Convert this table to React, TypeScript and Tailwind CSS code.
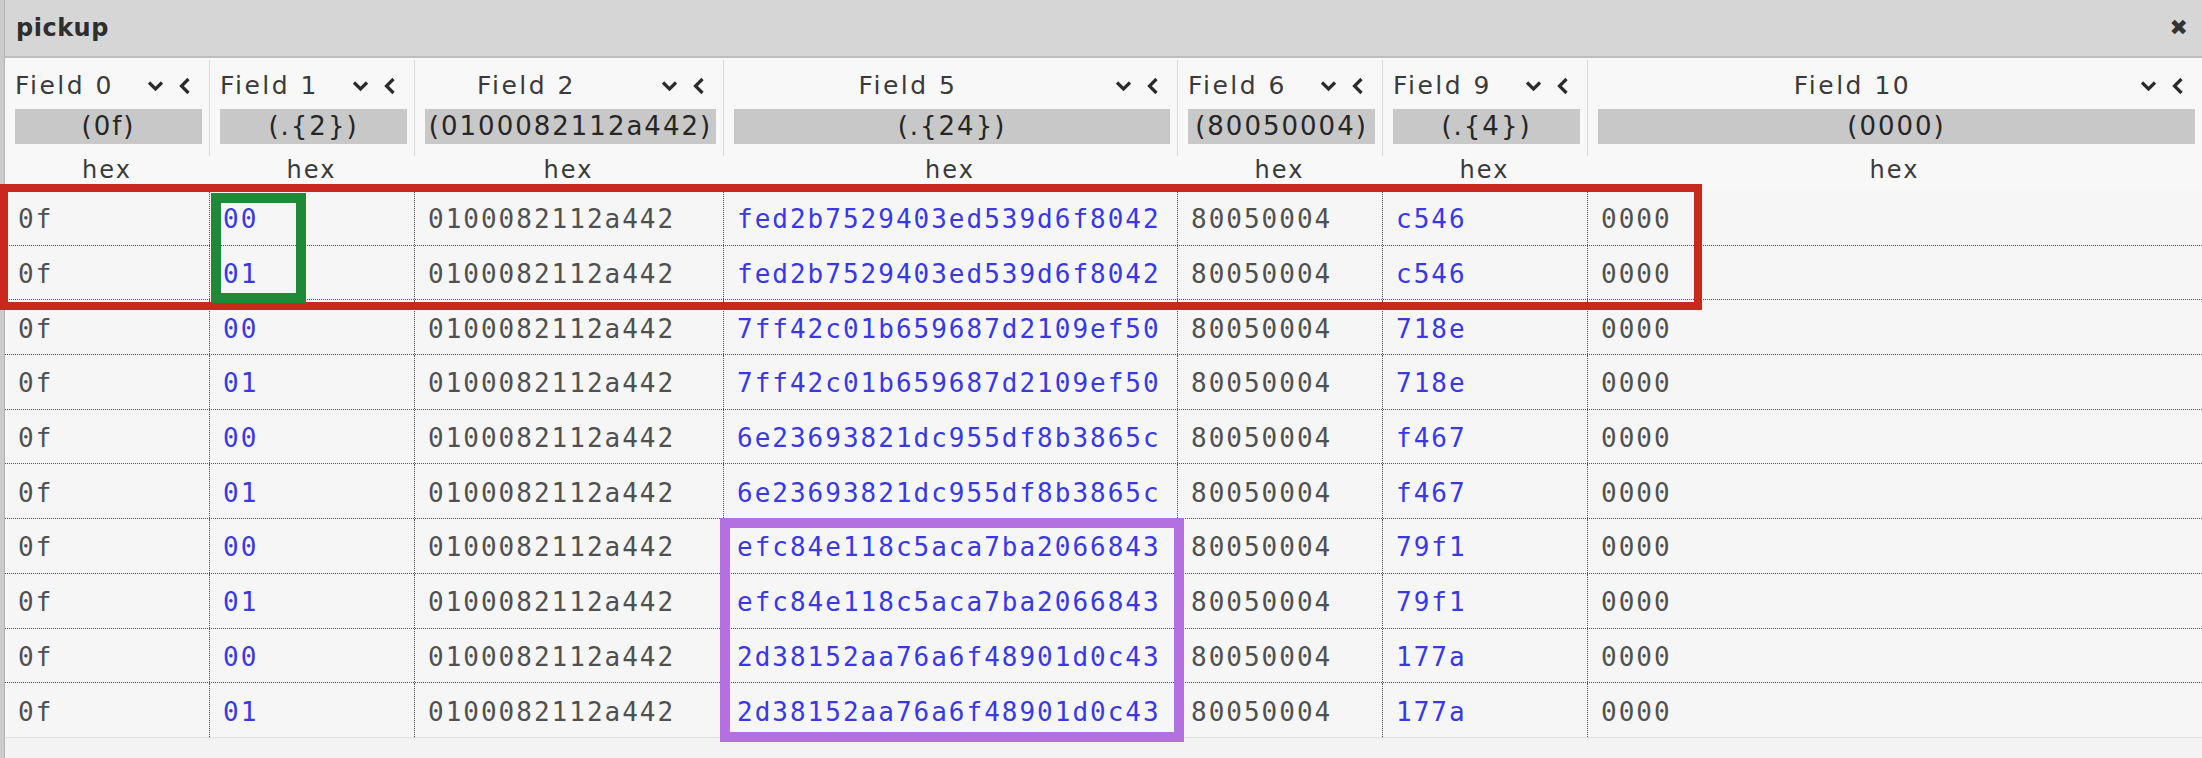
import React from 'react';

interface Column {
  name: string;
  pattern: string;
  width: string;
  blue?: boolean;
}

const columns: Column[] = [
  { name: 'Field 0', pattern: '(0f)', width: 'w-[204px]' },
  { name: 'Field 1', pattern: '(.{2})', width: 'w-[205px]', blue: true },
  { name: 'Field 2', pattern: '(0100082112a442)', width: 'w-[309px]' },
  { name: 'Field 5', pattern: '(.{24})', width: 'w-[454px]', blue: true },
  { name: 'Field 6', pattern: '(80050004)', width: 'w-[205px]' },
  { name: 'Field 9', pattern: '(.{4})', width: 'w-[205px]', blue: true },
  { name: 'Field 10', pattern: '(0000)', width: 'flex-1' },
];

const pairs: [string, string][] = [
  ['fed2b7529403ed539d6f8042', 'c546'],
  ['7ff42c01b659687d2109ef50', '718e'],
  ['6e23693821dc955df8b3865c', 'f467'],
  ['efc84e118c5aca7ba2066843', '79f1'],
  ['2d38152aa76a6f48901d0c43', '177a'],
];

const rows: string[][] = pairs.flatMap(([hash, crc]) =>
  ['00', '01'].map(idx => ['0f', idx, '0100082112a442', hash, '80050004', crc, '0000'])
);

const ChevronDown = () => (
  <svg width="17" height="12" viewBox="0 0 17 12" className="shrink-0">
    <path d="M2 2.5 L8.5 9 L15 2.5" fill="none" stroke="#2b2b2b" strokeWidth="3.2" />
  </svg>
);

const ChevronLeft = () => (
  <svg width="13" height="18" viewBox="0 0 13 18" className="shrink-0">
    <path d="M10.5 2 L3.5 9 L10.5 16" fill="none" stroke="#2b2b2b" strokeWidth="3.2" />
  </svg>
);

export default function App() {
  return (
    <div className="relative flex h-[758px] w-[2202px] overflow-hidden bg-[#f6f6f6] font-['DejaVu_Sans',sans-serif]">
      {/* window frame, left edge */}
      <div className="w-[5px] shrink-0 border-r border-[#b4b4b4] bg-[#cbcbcb]" />

      <div className="flex min-w-0 flex-1 flex-col">
        {/* Title bar */}
        <div className="flex h-[58px] shrink-0 items-center justify-between border-b-2 border-[#bebebe] bg-[#d6d6d6] pl-[11px] pr-[14px]">
          <span className="text-[24px] font-bold tracking-[0.5px] text-[#2e2e2e]">pickup</span>
          <span className="text-[22px] leading-none text-[#333]">✖</span>
        </div>

        {/* Column headers */}
        <div className="flex h-[133px] shrink-0 bg-[#f8f8f8] pt-[2px]">
          {columns.map((col, i) => (
            <div key={col.name} className={`${col.width} flex shrink-0 flex-col`}>
              <div className={`flex h-[96px] flex-col ${i > 0 ? 'border-l border-[#dadada]' : ''}`}>
                <div className="flex h-[44px] items-center pr-[18px] pt-[8px]">
                  <div className="flex-1 whitespace-nowrap pl-[5px] pr-[28px] text-center text-[25px] leading-[30px] tracking-[2.5px] text-[#3a3a3a]">
                    {col.name}
                  </div>
                  <ChevronDown />
                  <div className="w-[14px] shrink-0" />
                  <ChevronLeft />
                </div>
                <div className="ml-[10px] mr-[7px] mt-[5px] flex h-[35px] items-center justify-center overflow-hidden whitespace-nowrap bg-[#c8c8c8] text-[26px] tracking-[2px] text-[#262626]">
                  {col.pattern}
                </div>
              </div>
              <div className="flex h-[35px] items-start justify-center text-[24px] leading-[28px] tracking-[2px] text-[#3a3a3a]">
                hex
              </div>
            </div>
          ))}
        </div>

        {/* Rows */}
        <div className="flex flex-col font-['DejaVu_Sans_Mono',monospace] text-[26px] tracking-[2px]">
          {rows.map((row, r) => (
            <div
              key={r}
              className={`flex h-[54.7px] ${r < rows.length - 1 ? 'border-b border-dotted border-[#555]' : 'border-b border-[#e0e0e0]'}`}
            >
              {row.map((cell, c) => (
                <div
                  key={c}
                  className={`${columns[c].width} flex shrink-0 items-center whitespace-nowrap pl-[13px] pt-[4px] ${
                    c > 0 ? 'border-l border-dotted border-[#555]' : ''
                  } ${columns[c].blue ? 'text-[#3838e4]' : 'text-[#505050]'}`}
                >
                  {cell}
                </div>
              ))}
            </div>
          ))}
        </div>
        <div className="flex-1 bg-[#f3f3f3]" />
      </div>

      {/* Annotation boxes drawn over the table */}
      <div className="pointer-events-none absolute left-0 top-[184px] h-[126px] w-[1702px] border-[8px] border-[#c8281e]" />
      <div className="pointer-events-none absolute left-[211px] top-[193px] h-[110px] w-[95px] border-[10px] border-[#1e8a38]" />
      <div className="pointer-events-none absolute left-[720px] top-[518px] h-[224px] w-[464px] border-[10px] border-[#b46fe0]" />
    </div>
  );
}
